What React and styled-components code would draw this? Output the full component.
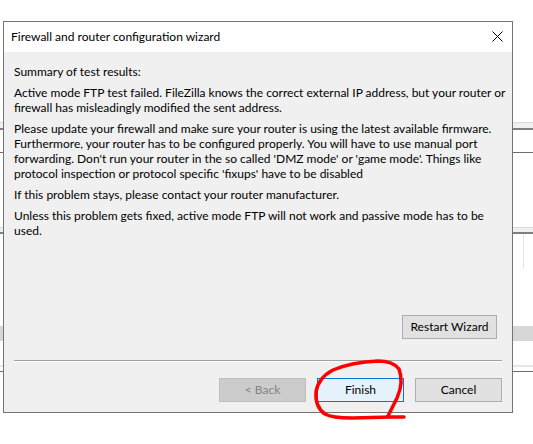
import React from "react";
import styled, { createGlobalStyle } from "styled-components";

const GlobalStyle = createGlobalStyle`
  html, body { margin: 0; padding: 0; background: #ffffff; }
  body { font-family: Lato, "Liberation Sans", sans-serif; font-size: 12px; color: #000; }
  * { box-sizing: border-box; }
`;

/* ---------- desktop & background window ---------- */

const Desktop = styled.div`
  position: relative;
  width: 533px;
  height: 444px;
  overflow: hidden;
  background: #ffffff;
`;

const BackWindow = styled.div`
  display: flex;
  flex-direction: column;
  width: 100%;
  height: 100%;
`;

const Stripe = styled.div`
  flex: none;
  height: ${(p) => p.$h}px;
  background: ${(p) => p.$c || "#ffffff"};
`;

const ListArea = styled.div`
  flex: none;
  height: 92px;
  display: flex;
  flex-direction: column;
`;

const ListHeader = styled.div`
  height: 34px;
  display: flex;
`;

const HeaderCell = styled.div`
  width: 524px;
  border-right: 1px solid #e3e3e3;
`;

/* ---------- dialog ---------- */

const Dialog = styled.div`
  position: absolute;
  left: 3px;
  top: 21px;
  width: 510px;
  height: 392px;
  border: 1px solid #747474;
  display: flex;
  flex-direction: column;
  background: #f0f0f0;
`;

const TitleBar = styled.div`
  flex: none;
  height: 30px;
  background: #ffffff;
  display: flex;
  align-items: center;
  justify-content: space-between;
  padding: 0 9px 0 7px;
`;

const Title = styled.span`
  font-size: 12px;
  white-space: nowrap;
  margin-top: -1px;
`;

const CloseIcon = styled.svg`
  display: block;
  width: 11px;
  height: 11px;
  margin-top: -1px;
`;

const Body = styled.div`
  flex: 1;
  display: flex;
  flex-direction: column;
  padding: 12px 10px 10px 10px;
`;

const Text = styled.div`
  flex: 1;
  display: flex;
  flex-direction: column;
  gap: 6px;
`;

const Para = styled.p`
  margin: 0;
  line-height: 15px;
  white-space: nowrap;
`;

const RestartRow = styled.div`
  display: flex;
  justify-content: flex-end;
  padding-right: 5px;
`;

const Separator = styled.div`
  margin-top: 21px;
  height: 2px;
  border-top: 1px solid #a0a0a0;
  border-bottom: 1px solid #ffffff;
`;

const ButtonRow = styled.div`
  margin-top: 16px;
  display: flex;
  justify-content: flex-end;
  gap: 11px;
`;

const Button = styled.button`
  width: ${(p) => p.$w || 87}px;
  height: 24px;
  padding: 0;
  margin: 0;
  font-family: Lato, "Liberation Sans", sans-serif;
  font-size: 12px;
  color: ${(p) => (p.$variant === "disabled" ? "#838383" : "#000000")};
  background: ${(p) =>
    p.$variant === "disabled" ? "#cccccc" : p.$variant === "default" ? "#e5f1fb" : "#e1e1e1"};
  border: 1px solid
    ${(p) =>
      p.$variant === "disabled" ? "#bfbfbf" : p.$variant === "default" ? "#0078d7" : "#adadad"};
  border-radius: 0;
  line-height: 22px;
  white-space: nowrap;
`;

const Annotation = styled.svg`
  position: absolute;
  left: 0;
  top: 0;
  width: 533px;
  height: 444px;
  pointer-events: none;
`;

const paragraphs = [
  ["Summary of test results:"],
  [
    "Active mode FTP test failed. FileZilla knows the correct external IP address, but your router or",
    "firewall has misleadingly modified the sent address.",
  ],
  [
    "Please update your firewall and make sure your router is using the latest available firmware.",
    "Furthermore, your router has to be configured properly. You will have to use manual port",
    "forwarding. Don't run your router in the so called 'DMZ mode' or 'game mode'. Things like",
    "protocol inspection or protocol specific 'fixups' have to be disabled",
  ],
  ["If this problem stays, please contact your router manufacturer."],
  [
    "Unless this problem gets fixed, active mode FTP will not work and passive mode has to be",
    "used.",
  ],
];

export default function App() {
  return (
    <>
      <GlobalStyle />
      <Desktop>
        <BackWindow>
          <Stripe $h={122} />
          <Stripe $h={1} $c="#dadada" />
          <Stripe $h={5} $c="#f0f0f0" />
          <Stripe $h={2} $c="#7f7f7f" />
          <Stripe $h={22} />
          <Stripe $h={1} $c="#6d6d6d" />
          <Stripe $h={74} />
          <Stripe $h={1} $c="#dadada" />
          <Stripe $h={4} $c="#f0f0f0" />
          <Stripe $h={2} $c="#7f7f7f" />
          <ListArea>
            <ListHeader>
              <HeaderCell />
            </ListHeader>
          </ListArea>
          <Stripe $h={15} $c="#d7d7d7" />
          <Stripe $h={24} />
          <Stripe $h={2} $c="#e6e6e6" />
          <Stripe $h={4} />
          <Stripe $h={1} $c="#6d6d6d" />
        </BackWindow>

        <Dialog>
          <TitleBar>
            <Title>Firewall and router configuration wizard</Title>
            <CloseIcon viewBox="0 0 11 11">
              <path d="M0.5 0.5 L10.5 10.5 M10.5 0.5 L0.5 10.5" stroke="#000" strokeWidth="1" fill="none" />
            </CloseIcon>
          </TitleBar>
          <Body>
            <Text>
              {paragraphs.map((lines, i) => (
                <Para key={i}>
                  {lines.map((l, j) => (
                    <React.Fragment key={j}>
                      {j > 0 && <br />}
                      {l}
                    </React.Fragment>
                  ))}
                </Para>
              ))}
            </Text>
            <RestartRow>
              <Button $w={95}>Restart Wizard</Button>
            </RestartRow>
            <Separator />
            <ButtonRow>
              <Button $variant="disabled" disabled>
                &lt; Back
              </Button>
              <Button $variant="default">Finish</Button>
              <Button>Cancel</Button>
            </ButtonRow>
          </Body>
        </Dialog>

        <Annotation viewBox="0 0 533 444">
          <path
            d="M388 416 Q392 408 397 398 Q404 382 399 369 Q393 361 378 361 Q352 362 333 370 Q318 378 316 392 Q315 407 325 414 Q332 418 352 418 L392 417 L404 417"
            stroke="#ff0000"
            strokeWidth="3.5"
            strokeLinecap="round"
            strokeLinejoin="round"
            fill="none"
          />
        </Annotation>
      </Desktop>
    </>
  );
}
